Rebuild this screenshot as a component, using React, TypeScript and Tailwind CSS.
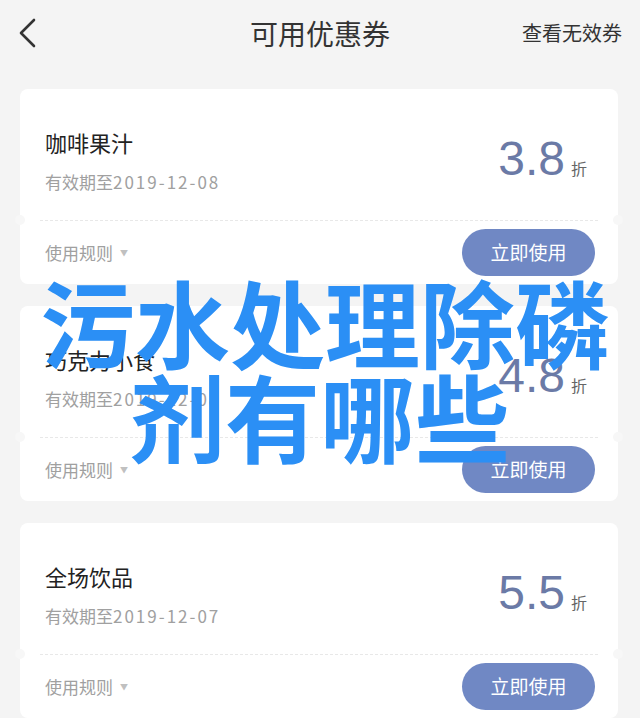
import React from "react";

type Coupon = {
  name: string;
  expire: string;
  discount: string;
};

const coupons: Coupon[] = [
  { name: "咖啡果汁", expire: "2019-12-08", discount: "3.8" },
  { name: "巧克力小食", expire: "2019-12-08", discount: "4.8" },
  { name: "全场饮品", expire: "2019-12-07", discount: "5.5" },
];

const cjk = "font-['PingFang_SC','Noto_Sans_CJK_SC',sans-serif]";

const CouponCard: React.FC<{ coupon: Coupon }> = ({ coupon }) => {
  return (
    <div className="relative bg-white rounded-[8px] h-[195px] flex flex-col">
      <div className="h-[131px] flex items-start justify-between pl-[25px] pr-[31px] pt-[40px]">
        <div className="flex flex-col">
          <p className="text-[22px] leading-[26px] text-[#222]">{coupon.name}</p>
          <p className="mt-[16px] text-[17px] leading-[22px] text-[#a0a0a0]">
            有效期至<span className="tracking-[2px]">{coupon.expire}</span>
          </p>
        </div>
        <div className="flex items-baseline mt-[6px]">
          <span className="font-['Liberation_Sans',sans-serif] text-[48px] leading-[48px] text-[#6b7aa6]">
            {coupon.discount}
          </span>
          <span className="ml-[6px] text-[16px] text-[#666]">折</span>
        </div>
      </div>
      <div className="mx-[20px] border-t border-dashed border-[#e8e8e8]" />
      <div className="flex-1 flex items-center justify-between pl-[25px] pr-[23px]">
        <div className="flex items-center text-[17px] text-[#a0a0a0]">
          使用规则
          <span className="ml-[7px] text-[8px] text-[#c0c0c0]">▼</span>
        </div>
        <button className="w-[133px] h-[47px] rounded-full bg-[#7088c4] text-white text-[19px]">
          立即使用
        </button>
      </div>
      <span className="absolute left-[-5px] top-[126px] w-[10px] h-[10px] rounded-full bg-[#f7f7f7]" />
      <span className="absolute right-[-5px] top-[126px] w-[10px] h-[10px] rounded-full bg-[#f7f7f7]" />
    </div>
  );
};

const App: React.FC = () => {
  return (
    <div className={`relative w-[640px] h-[718px] overflow-hidden bg-[#f4f4f4] ${cjk}`}>
      <header className="h-[66px] flex items-center justify-between pl-[16px] pr-[18px]">
        <svg width="24" height="34" viewBox="0 0 24 34" fill="none" stroke="#333" strokeWidth="2.6" strokeLinecap="round" strokeLinejoin="round">
          <path d="M18 4 L5 17 L18 30" />
        </svg>
        <h1 className="text-[28px] text-[#333] ml-[78px]">可用优惠券</h1>
        <span className="text-[20px] text-[#333]">查看无效券</span>
      </header>
      <div className="flex flex-col gap-[22px] pl-[20px] pr-[22px] pt-[23px]">
        {coupons.map((c) => (
          <CouponCard key={c.name} coupon={c} />
        ))}
      </div>
      <div className="absolute left-0 right-0 top-[274px] flex flex-col items-center pointer-events-none">
        <p className="text-[95px] leading-[94px] font-bold text-[#2b8ff5] ml-[10px]">污水处理除磷</p>
        <p className="text-[95px] leading-[94px] font-bold text-[#2b8ff5]">剂有哪些</p>
      </div>
    </div>
  );
};

export default App;
